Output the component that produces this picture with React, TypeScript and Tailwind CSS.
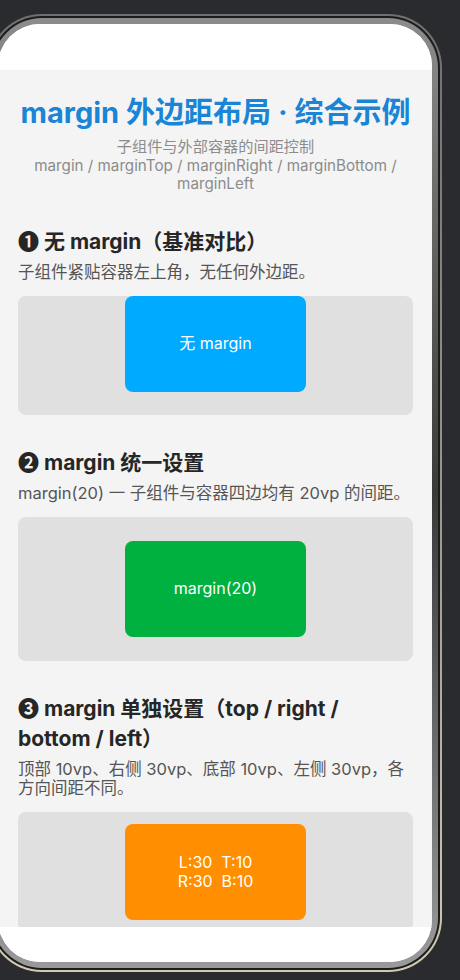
import React from "react";

const font = "font-['Inter','Noto_Sans_CJK_SC',sans-serif]";

function Demo({ children, className }: { children: React.ReactNode; className: string }) {
  return <div className={`flex justify-center rounded-[8px] bg-[#e0e0e0] ${className}`}>{children}</div>;
}

function Child({ color, children }: { color: string; children: React.ReactNode }) {
  return (
    <div className={`flex h-[96px] w-[181px] items-center justify-center rounded-[8px] text-center text-[16px] leading-[19px] text-white ${color}`}>
      {children}
    </div>
  );
}

function Section({ title, desc, children }: { title: React.ReactNode; desc: React.ReactNode; children: React.ReactNode }) {
  return (
    <section className="mt-[33px] first:mt-[29px]">
      <h2 className="text-[21px] font-bold leading-[30px] text-[#262626]">{title}</h2>
      <p className="mt-[6px] text-[16.5px] leading-[19px] text-[#555]">{desc}</p>
      <div className="mt-[14px]">{children}</div>
    </section>
  );
}

export default function App() {
  return (
    <div className={`h-[980px] overflow-hidden bg-[#2a2b2f] pt-[14px] ${font}`}>
      {/* phone frame */}
      <div className="ml-[-12px] w-[454px] rounded-[54px] bg-linear-to-b from-[#6f6f6f] via-[#9a968c] to-[#d4cab2] p-[2px]">
        <div className="rounded-[52px] bg-[#1c1c1c] p-[2px]">
          <div className="rounded-[50px] bg-linear-to-b from-[#8c8c8c] via-[#3a3a3a] to-[#9a9a9a] p-[6px]">
            <div className="flex h-[938px] flex-col overflow-hidden rounded-[42px] bg-white">
              <div className="h-[46px] shrink-0 bg-white" />

              <div className="h-[857px] shrink-0 overflow-hidden bg-[#f4f4f4] pl-[20px] pr-[19px] pt-[25px]">
                <h1 className="text-center text-[29px] font-bold leading-[36px] text-[#1a84d6]">
                  margin 外边距布局 · 综合示例
                </h1>
                <p className="mt-[7px] text-center text-[15.2px] leading-[18.5px] text-[#8c8c8c]">
                  子组件与外部容器的间距控制
                  <br />
                  margin / marginTop / marginRight / marginBottom /
                  <br />
                  marginLeft
                </p>

                <Section title="❶ 无 margin（基准对比）" desc="子组件紧贴容器左上角，无任何外边距。">
                  <Demo className="h-[119px] items-start">
                    <Child color="bg-[#00aaff]">无 margin</Child>
                  </Demo>
                </Section>

                <Section title="❷ margin 统一设置" desc="margin(20) 一 子组件与容器四边均有 20vp 的间距。">
                  <Demo className="py-[24px]">
                    <Child color="bg-[#00b140]">margin(20)</Child>
                  </Demo>
                </Section>

                <Section
                  title={
                    <>
                      ❸ margin 单独设置（top / right /
                      <br />
                      bottom / left）
                    </>
                  }
                  desc={
                    <>
                      顶部 10vp、右侧 30vp、底部 10vp、左侧 30vp，各
                      <br />
                      方向间距不同。
                    </>
                  }
                >
                  <Demo className="py-[12px]">
                    <Child color="bg-[#ff8f00]">
                      L:30&nbsp;&nbsp;T:10
                      <br />
                      R:30&nbsp;&nbsp;B:10
                    </Child>
                  </Demo>
                </Section>
              </div>

              <div className="flex-1 bg-white" />
            </div>
          </div>
        </div>
      </div>
    </div>
  );
}
